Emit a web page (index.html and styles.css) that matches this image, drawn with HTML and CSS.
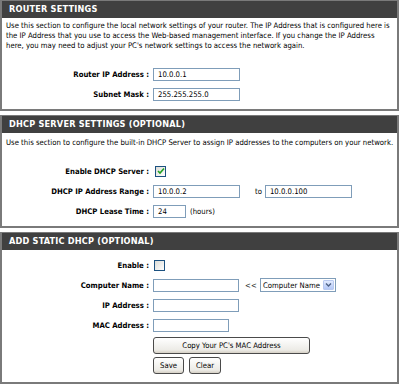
FILE: index.html
```html
<!DOCTYPE html>
<html>
<head>
<meta charset="utf-8">
<link rel="stylesheet" href="styles.css">
</head>
<body>
<div class="page">
  <section class="box">
    <h2 class="hdr">ROUTER SETTINGS</h2>
    <div class="body b1">
      <p class="desc">Use this section to configure the local network settings of your router. The IP Address that is configured here is the IP Address that you use to access the Web-based management interface. If you change the IP Address here, you may need to adjust your PC's network settings to access the network again.</p>
      <div class="rows first">
        <div class="row"><span class="lbl">Router IP Address :</span><span class="fld w87">10.0.0.1</span></div>
        <div class="row"><span class="lbl">Subnet Mask :</span><span class="fld w87">255.255.255.0</span></div>
      </div>
    </div>
  </section>
  <section class="box">
    <h2 class="hdr">DHCP SERVER SETTINGS (OPTIONAL)</h2>
    <div class="body b2">
      <p class="desc">Use this section to configure the built-in DHCP Server to assign IP addresses to the computers on your network.</p>
      <div class="rows second">
        <div class="row"><span class="lbl">Enable DHCP Server :</span><span class="chk on"><svg width="8" height="8" viewBox="0 0 8 8"><path d="M1 4 L3 6 L7 1.5" fill="none" stroke="#21a121" stroke-width="1.6"/></svg></span></div>
        <div class="row"><span class="lbl">DHCP IP Address Range :</span><span class="fld w87">10.0.0.2</span><span class="txt to">to</span><span class="fld w87">10.0.0.100</span></div>
        <div class="row"><span class="lbl">DHCP Lease Time :</span><span class="fld w33">24</span><span class="txt hrs">(hours)</span></div>
      </div>
    </div>
  </section>
  <section class="box">
    <h2 class="hdr">ADD STATIC DHCP (OPTIONAL)</h2>
    <div class="body b3">
      <div class="rows third">
        <div class="row"><span class="lbl">Enable :</span><span class="chk"></span></div>
        <div class="row"><span class="lbl">Computer Name :</span><span class="fld w86"></span><span class="txt ll">&lt;&lt;</span><span class="sel">Computer Name<span class="arr"><svg width="7" height="6" viewBox="0 0 7 6"><path d="M1 1.5 L3.5 4 L6 1.5" fill="none" stroke="#4d6185" stroke-width="1.4"/></svg></span></span></div>
        <div class="row"><span class="lbl">IP Address :</span><span class="fld w86"></span></div>
        <div class="row"><span class="lbl">MAC Address :</span><span class="fld w75"></span></div>
        <div class="row btnrow"><span class="lbl"></span><button class="btn copy">Copy Your PC's MAC Address</button></div>
        <div class="row btnrow"><span class="lbl"></span><button class="btn">Save</button><button class="btn">Clear</button></div>
      </div>
    </div>
  </section>
</div>
</body>
</html>
```
FILE: styles.css
```css
html, body {
  margin: 0;
  padding: 0;
  background: #fff;
}
.page {
  width: 399px;
  display: flex;
  flex-direction: column;
  gap: 4px;
  font-family: "DejaVu Sans Condensed", "DejaVu Sans", sans-serif;
  font-size: 7.7px;
  color: #000;
}
.box {
  border: 1px solid #7a7a7a;
  border-left-width: 2px;
  border-right-width: 2px;
  border-bottom-width: 2px;
  background: #fff;
}
.hdr {
  margin: 0;
  height: 17px;
  line-height: 17px;
  background: #404040;
  color: #fff;
  font-family: "DejaVu Sans Condensed", "DejaVu Sans", sans-serif;
  font-weight: bold;
  font-size: 9.1px;
  letter-spacing: 0.2px;
  padding-left: 7px;
}
.body {
  padding: 0 3px 0 4px;
}
.desc {
  margin: 0;
  line-height: 10px;
}
.b1 { padding-top: 3px; padding-bottom: 5px; }
.b2 { padding-top: 5px; padding-bottom: 5px; }
.b3 { padding-top: 5px; padding-bottom: 7px; }
.rows {
  display: flex;
  flex-direction: column;
}
.rows.first { margin-top: 13px; }
.rows.second { margin-top: 13px; }
.row {
  display: flex;
  align-items: center;
  height: 20px;
}
.btnrow { height: 19px; margin-top: 1px; }
.lbl {
  width: 143px;
  text-align: right;
  font-weight: bold;
  padding-right: 4px;
  flex: none;
}
.fld {
  box-sizing: border-box;
  height: 13px;
  line-height: 11px;
  border: 1px solid #7f9db9;
  padding: 0 4px;
  background: #fff;
  flex: none;
}
.w87 { width: 87px; }
.w86 { width: 86px; }
.w75 { width: 76px; }
.w33 { width: 33px; }
.txt { margin-left: 4px; }
.to { margin-left: 15px; margin-right: 3px; }
.hrs { margin-left: 4px; }
.ll { margin-left: 6px; margin-right: 3px; letter-spacing: 0.2px; color: #333; }
.chk {
  box-sizing: border-box;
  width: 11px;
  height: 11px;
  border: 1px solid #1c5180;
  background: linear-gradient(135deg, #dcdcd7, #fff);
  display: flex;
  align-items: center;
  justify-content: center;
  margin-left: 1px;
}
.chk.on { margin-left: 2px; }
.sel {
  box-sizing: border-box;
  height: 14px;
  width: 76px;
  border: 1px solid #7f9db9;
  display: flex;
  align-items: center;
  padding-left: 2px;
  justify-content: space-between;
}
.arr {
  width: 11px;
  height: 10px;
  margin-right: 1px;
  background: linear-gradient(#e1eafe, #b4c8f6);
  border: 1px solid #b9c9ef;
  box-sizing: border-box;
  border-radius: 1px;
  display: flex;
  align-items: center;
  justify-content: center;
}
.btn {
  box-sizing: border-box;
  height: 17px;
  padding: 0 6px;
  font-family: "DejaVu Sans Condensed", "DejaVu Sans", sans-serif;
  font-size: 7.7px;
  color: #000;
  border: 1px solid #4a4a4a;
  border-radius: 3px;
  background: linear-gradient(#ffffff, #ecebe6 80%, #d6d0c5);
  margin-right: 5px;
}
.copy { width: 157px; }
```
